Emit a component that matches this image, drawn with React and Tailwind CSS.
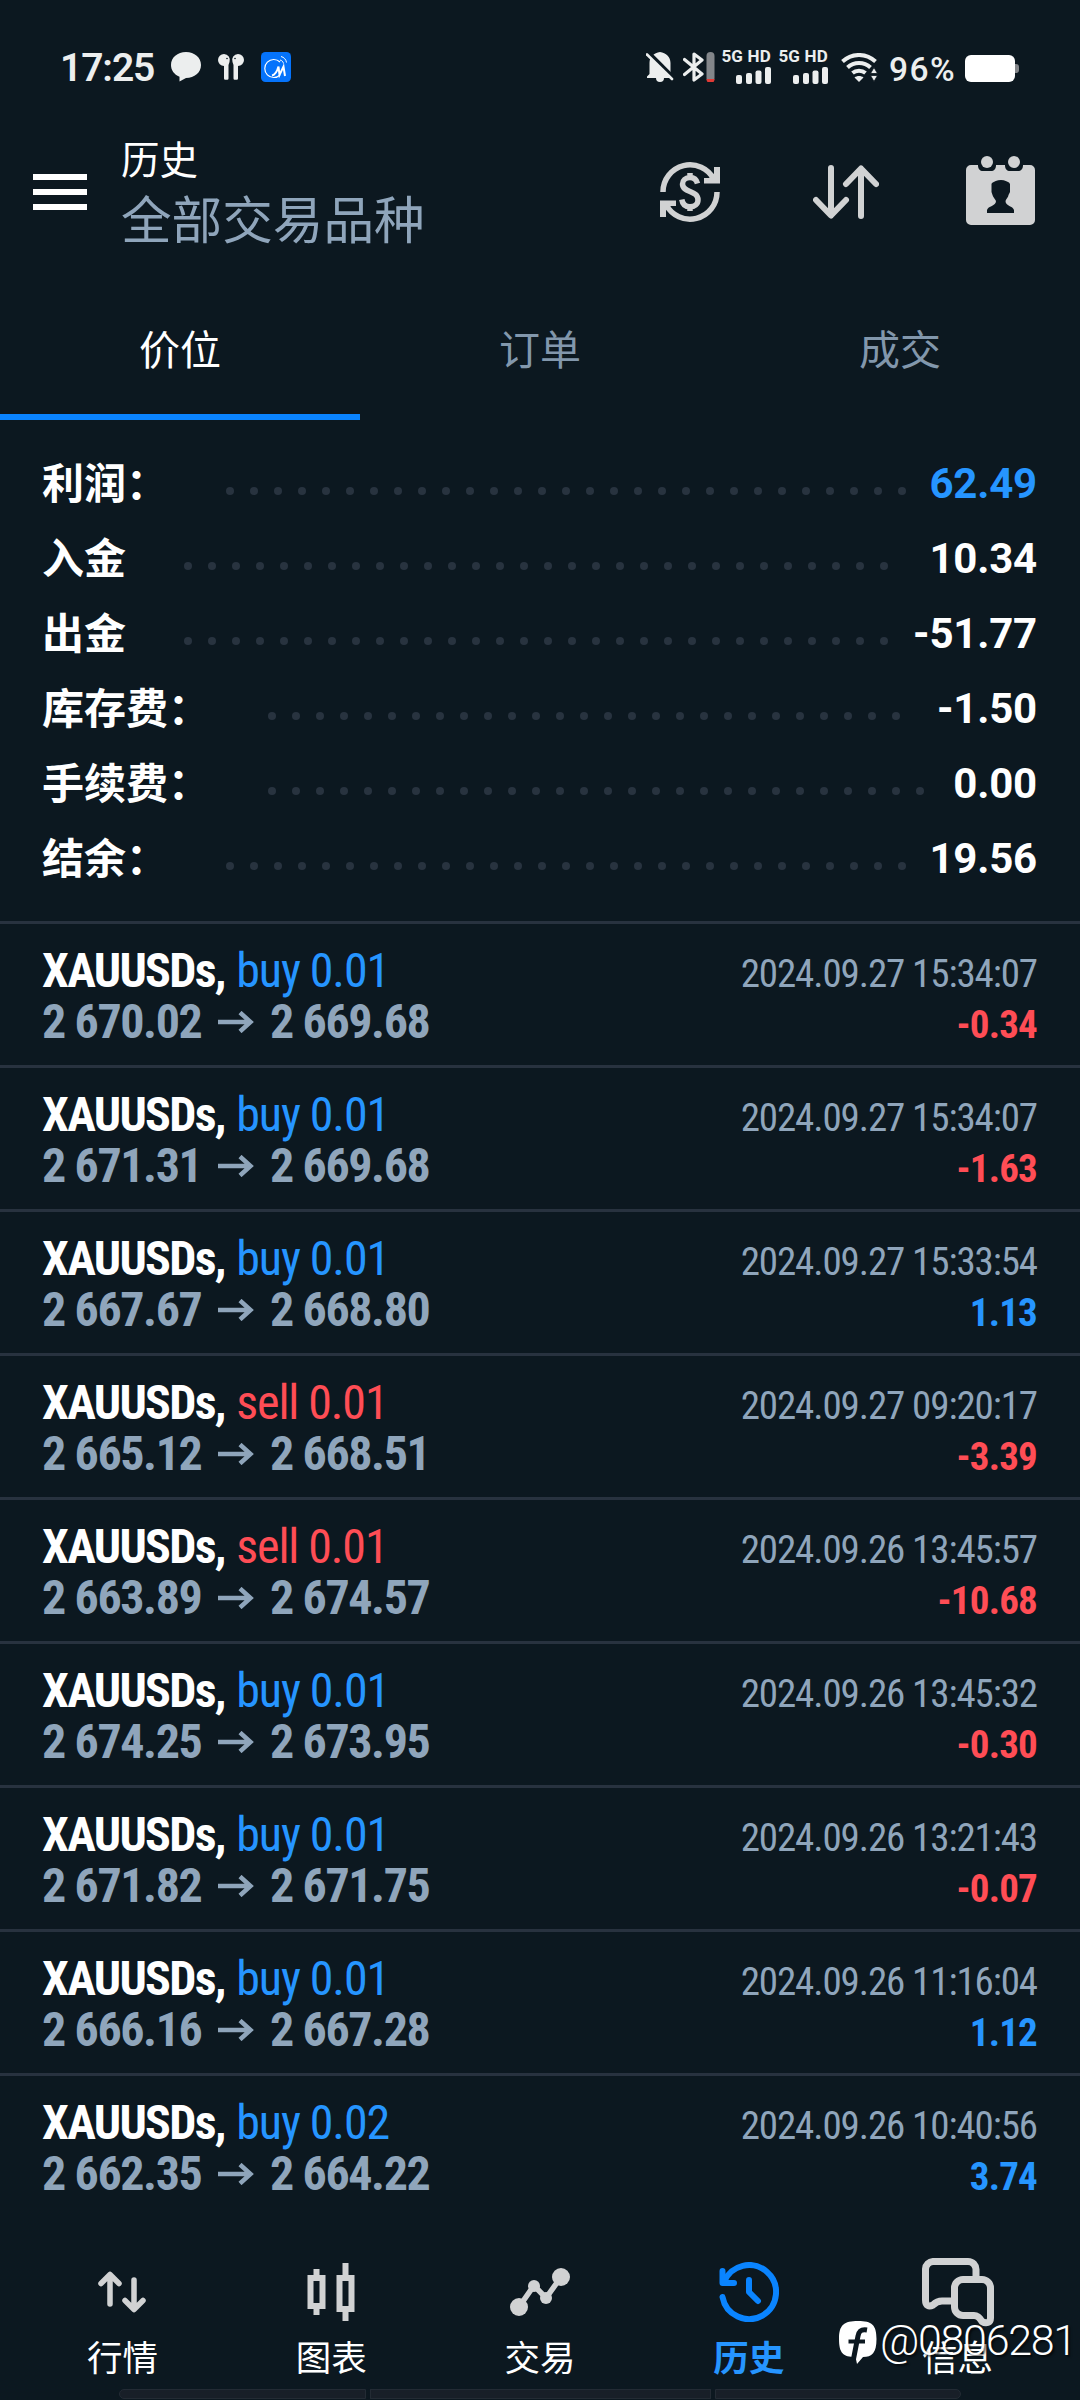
import clsx from 'clsx';

const summary = [
  { label: '利润：', value: '62.49', dots: 29, accent: true },
  { label: '入金', value: '10.34', dots: 30 },
  { label: '出金', value: '-51.77', dots: 30 },
  { label: '库存费：', value: '-1.50', dots: 27 },
  { label: '手续费：', value: '0.00', dots: 28 },
  { label: '结余：', value: '19.56', dots: 29 },
];

const trades = [
  { side: 'buy', lot: '0.01', open: '2 670.02', close: '2 669.68', time: '2024.09.27 15:34:07', profit: '-0.34' },
  { side: 'buy', lot: '0.01', open: '2 671.31', close: '2 669.68', time: '2024.09.27 15:34:07', profit: '-1.63' },
  { side: 'buy', lot: '0.01', open: '2 667.67', close: '2 668.80', time: '2024.09.27 15:33:54', profit: '1.13' },
  { side: 'sell', lot: '0.01', open: '2 665.12', close: '2 668.51', time: '2024.09.27 09:20:17', profit: '-3.39' },
  { side: 'sell', lot: '0.01', open: '2 663.89', close: '2 674.57', time: '2024.09.26 13:45:57', profit: '-10.68' },
  { side: 'buy', lot: '0.01', open: '2 674.25', close: '2 673.95', time: '2024.09.26 13:45:32', profit: '-0.30' },
  { side: 'buy', lot: '0.01', open: '2 671.82', close: '2 671.75', time: '2024.09.26 13:21:43', profit: '-0.07' },
  { side: 'buy', lot: '0.01', open: '2 666.16', close: '2 667.28', time: '2024.09.26 11:16:04', profit: '1.12' },
  { side: 'buy', lot: '0.02', open: '2 662.35', close: '2 664.22', time: '2024.09.26 10:40:56', profit: '3.74' },
];

function Signal() {
  return (
    <div className="w-12 flex flex-col items-end">
      <span className="text-[17px] leading-[14px] font-bold tracking-[0.2px] whitespace-nowrap">5G HD</span>
      <svg width="35" height="17" viewBox="0 0 35 17" fill="#eceeee" className="mt-[4px]">
        <rect x="0" y="8" width="6" height="9" rx="2" />
        <rect x="10" y="6" width="6" height="11" rx="2" />
        <rect x="19.5" y="3.5" width="6" height="13.5" rx="2" />
        <rect x="29" y="0" width="6" height="17" rx="2" />
      </svg>
    </div>
  );
}

function StatusBar() {
  return (
    <div className="h-[112px] pt-[47px] flex items-start text-[#eceeee] font-['Roboto',sans-serif]">
      <span className="ml-[60px] mt-[1px] w-[111px] text-[39px] leading-[40px] font-semibold tracking-[-1.1px]">17:25</span>
      <svg width="30" height="30" viewBox="0 0 30 30" fill="#eceeee" className="mt-[5px]">
        <path d="M15 0C23.500 0 30 5.500 30 13S23.500 26 15 26L8.500 29.500V24.800C3 22.500 0 18 0 13C0 5.500 6.500 0 15 0Z" />
      </svg>
      <svg width="26" height="26" viewBox="0 0 26 26" className="ml-[17px] mt-[7px]">
        <g fill="#eceeee">
          <path d="M6 0a6 6 0 0 1 5.500 8L10.500 11V24.500a1.200 1.200 0 0 1-1.200 1.200H7.200A1.200 1.200 0 0 1 6 24.500V12A6 6 0 0 1 6 0Z" />
          <path d="M20 0a6 6 0 0 0-5.500 8L15.500 11V24.500a1.200 1.200 0 0 0 1.200 1.200h2.100A1.200 1.200 0 0 0 20 24.500V12A6 6 0 0 0 20 0Z" />
        </g>
        <circle cx="9" cy="4.500" r="0.800" fill="#0c1820" />
        <circle cx="17" cy="4.500" r="0.800" fill="#0c1820" />
      </svg>
      <svg width="30" height="30" viewBox="0 0 30 30" fill="none" stroke="#fff" className="ml-[17px] mt-[5px]">
        <rect width="30" height="30" rx="4.500" fill="#0573fb" stroke="none" />
        <path d="M19 10A9 9 0 1 0 19 23" strokeWidth="1.200" />
        <path d="M11 23.500C15 22.500 16.500 18 17.500 14.500L18.500 23L22.500 14.500L24 24" strokeWidth="2" />
        <path d="M19 8c2 .5 3 1.500 3.500 3.500M20 4.500c3 .8 5 2.800 5.500 6" strokeWidth="1" />
      </svg>

      <svg width="28" height="30" viewBox="0 0 28 30" className="ml-[355px] mt-[5px]">
        <path d="M14 0C20 1 24.500 4.500 24.500 11V22L26.500 24.500V26H18a4 4 0 0 1-8 0H1V24.500L3.500 22V11C3.500 4.500 8 1 14 0Z" fill="#eceeee" />
        <path d="M2 0L28 26" stroke="#0c1820" strokeWidth="4" />
        <path d="M1 2.500L26 27" stroke="#eceeee" strokeWidth="2.600" strokeLinecap="round" />
      </svg>
      <svg width="32" height="30" viewBox="0 0 32 30" className="ml-[9px] mt-[5px]" fill="none">
        <path d="M1.500 7.500L19 22L11 28V2L19 8L1.500 22.500" stroke="#eceeee" strokeWidth="3.200" strokeLinejoin="round" strokeLinecap="round" />
        <rect x="23.500" width="8" height="30" rx="4" fill="#83868a" />
        <path d="M23.500 27H31.500A4 4 0 0 1 23.500 27Z" fill="#e23a35" />
      </svg>
      <div className="ml-[8px] mt-[2px] flex gap-[9px]">
        <Signal />
        <Signal />
      </div>
      <svg width="37" height="30" viewBox="0 0 37 30" fill="none" stroke="#eceeee" strokeWidth="4" className="ml-[13px] mt-[6px]">
        <path d="M1.500 8.500C11 -0.200 25 -0.200 34.500 8.500" />
        <path d="M6.500 14.500C13 8.500 23 8.500 29.500 14.500" />
        <path d="M11.500 20C15 17 21 17 24.500 20" />
        <path d="M18 29L13.500 24.500C16 22.500 20 22.500 22.500 24.500Z" fill="#eceeee" stroke="none" />
        <path d="M33 14.500L36.500 20.500H29.500ZM33 28.500L29.500 22.500H36.500Z" fill="#eceeee" stroke="#0c1820" strokeWidth="0.800" />
      </svg>
      <span className="ml-[11px] mt-[3px] w-[68px] text-[33.5px] leading-[40px] font-medium tracking-[1.4px] whitespace-nowrap">96%</span>
      <div className="ml-[8px] mt-[8px] flex items-center">
        <div className="w-[50px] h-[27px] rounded-[6px] bg-white" />
        <div className="w-1 h-[9px] rounded-r-[3px] bg-[#83868a]" />
      </div>
    </div>
  );
}

function Header() {
  return (
    <header className="h-[160px] flex items-center">
      <button className="ml-[33px] w-[54px] flex flex-col gap-[9px]">
        <span className="h-[6px] bg-white" />
        <span className="h-[6px] bg-white" />
        <span className="h-[6px] bg-white" />
      </button>
      <div className="ml-[34px] flex-1 flex flex-col gap-[7px] pb-[3px]">
        <h1 className="text-[38.500px] leading-[46px] text-white">历史</h1>
        <p className="text-[50.600px] leading-[60px] text-[#8fa5bb]">全部交易品种</p>
      </div>
      <svg width="60" height="60" viewBox="0 0 60 60" fill="none" stroke="#d1d2d3" strokeWidth="5.500">
        <path d="M3 30A27 27 0 0 1 54 17.500" />
        <path d="M44 16H49L54 12V5H60V21.500H44Z" fill="#d1d2d3" stroke="none" />
        <path d="M57 30A27 27 0 0 1 6 42.500" />
        <path d="M16 44H11L6 48V55H0V38.500H16Z" fill="#d1d2d3" stroke="none" />
        <path d="M37.500 21.500C36.500 17.500 33.500 15.500 30 15.500C25.500 15.500 22.500 18.500 22.500 22C22.500 31 38 28 38 38C38 42 34.500 44.800 30 44.800C25.500 44.800 22.500 42 21.800 37.500M30 11V16M30 44V49" />
      </svg>
      <svg width="66" height="54" viewBox="0 0 66 54" fill="none" stroke="#d1d2d3" strokeWidth="6" strokeLinecap="round" strokeLinejoin="round" className="ml-[93px]">
        <path d="M18 3V50M3 35L18 50.500L33 35" />
        <path d="M48 51V4M33 19L48 3.500L63 19" />
      </svg>
      <svg width="69" height="69" viewBox="0 0 69 69" fill="#d1d2d3" className="ml-[87px] mr-[45px] mb-[3px]">
        <path d="M5 9H12C12 13 14 15 17 15H25C28 15 30 13 30 9H39C39 13 41 15 44 15H52C55 15 57 13 57 9H64A5 5 0 0 1 69 14V64A5 5 0 0 1 64 69H5A5 5 0 0 1 0 64V14A5 5 0 0 1 5 9Z" />
        <circle cx="21" cy="6" r="6" />
        <circle cx="48" cy="6" r="6" />
        <path d="M26 27C28 25.500 31 24 35 24C39 24 41 25.500 43 26.500L44 28V36L42.500 39C42.500 41 40 43 39.500 45C39.500 50 47 50 48 54V57H21V54C22 50 30 50 30 45C29 43 27 41 26.500 39L25.500 36V28Z" fill="#0c1820" />
      </svg>
    </header>
  );
}

function Tabs() {
  return (
    <div className="h-[148px] grid grid-cols-3 text-center text-[41px] leading-[60px] text-[#8297ac]">
      <div className="pt-[45px] border-b-[6px] border-[#0a84ff] text-white">价位</div>
      <div className="pt-[45px]">订单</div>
      <div className="pt-[45px]">成交</div>
    </div>
  );
}

function SummaryRow({ label, value, dots, accent }) {
  return (
    <div className="h-[75px] px-[42px] flex items-center font-bold text-[42px] leading-[75px] text-white">
      <span className="whitespace-nowrap">{label}</span>
      <div className="ml-[58px] mt-[21px] flex gap-4">
        {Array.from({ length: dots }, (_, i) => (
          <span key={i} className="size-2 rounded-full bg-[#28333f]" />
        ))}
      </div>
      <span className={clsx("ml-auto mr-[1px] mt-[5px] font-['Roboto',sans-serif] tracking-[-0.2px]", accent && 'text-[#2695ff]')}>{value}</span>
    </div>
  );
}

function TradeRow({ side, lot, open, close, time, profit }) {
  const loss = profit.startsWith('-');
  return (
    <div className="h-[144px] border-t-[3px] border-[#28323f] pt-[21px] pl-[42px] pr-[43px] font-['Roboto_Condensed','Roboto',sans-serif] font-stretch-condensed text-[48px] leading-[51px]">
      <div className="h-[51px] flex items-baseline justify-between">
        <div className="whitespace-nowrap">
          <span className="font-bold tracking-[-1.7px] text-white">XAUUSDs, </span>
          <span className={clsx('ml-[2px] tracking-[-1.1px]', side === 'buy' ? 'text-[#2695ff]' : 'text-[#ff4d55]')}>{side} {lot}</span>
        </div>
        <span className="text-[39px] tracking-[-1.1px] text-[#8fa5bb]">{time}</span>
      </div>
      <div className="h-[51px] flex items-baseline justify-between font-bold text-[#8fa5bb]">
        <div className="flex items-baseline whitespace-nowrap tracking-[-1.4px]">
          <span className="w-[176px]">{open}</span>
          <svg width="36" height="22" viewBox="0 0 36 22" fill="none" stroke="#8fa5bb" strokeWidth="4.500" className="mb-[14px] self-end">
            <path d="M0 11H33M22 1.500L32.500 11L22 20.500" />
          </svg>
          <span className="ml-[16px]">{close}</span>
        </div>
        <span className={clsx('text-[39px] tracking-[-0.8px]', loss ? 'text-[#ff4d55]' : 'text-[#2695ff]')}>{profit}</span>
      </div>
    </div>
  );
}

function NavItem({ label, active, children }) {
  return (
    <div className="flex flex-col items-center">
      <div className="h-[72px] flex items-center justify-center">{children}</div>
      <span className={clsx('mt-[8px] text-[35.500px] leading-[40px]', active ? 'font-bold text-[#2695ff]' : 'text-white')}>
        {label}
      </span>
    </div>
  );
}

function BottomNav() {
  return (
    <nav className="h-[172px] pt-[39px] px-[18px] grid grid-cols-5">
      <NavItem label="行情">
        <svg width="48" height="42" viewBox="0 0 48 42" fill="none" stroke="#d1d2d3" strokeWidth="5.500" strokeLinecap="round" strokeLinejoin="round">
          <path d="M12 33V4M3 12.500L12 3.500L21 12.500" />
          <path d="M36 9V38M27 29.500L36 38.500L45 29.500" />
        </svg>
      </NavItem>
      <NavItem label="图表">
        <svg width="48" height="58" viewBox="0 0 48 58" fill="none" stroke="#d1d2d3" strokeWidth="6">
          <path d="M3.500 15H15.500V43H3.500ZM9.500 6V15M9.500 43V52" />
          <path d="M32.500 15H44.500V46H32.500ZM38.500 0V15M38.500 46V58" />
        </svg>
      </NavItem>
      <NavItem label="交易">
        <svg width="60" height="48" viewBox="0 0 60 48" fill="#d1d2d3">
          <path d="M9 39L24 17.500L36 30L51 9" fill="none" stroke="#d1d2d3" strokeWidth="5.500" />
          <circle cx="9" cy="39" r="9" />
          <circle cx="24" cy="18" r="6" />
          <circle cx="36" cy="30" r="6" />
          <circle cx="51" cy="9" r="9" />
        </svg>
      </NavItem>
      <NavItem label="历史" active>
        <svg width="60" height="60" viewBox="0 0 60 60" fill="none" stroke="#0a84ff" strokeWidth="6" strokeLinecap="round" strokeLinejoin="round">
          <path d="M3.500 35A27 27 0 1 0 5 20" />
          <path d="M3.500 9V21H15" />
          <path d="M30 18V30L39 39" />
        </svg>
      </NavItem>
      <NavItem label="信息">
        <svg width="72" height="69" viewBox="0 0 72 69" fill="none" stroke="#d1d2d3" strokeWidth="7" strokeLinejoin="round">
          <path d="M54 20V12A8 8 0 0 0 46 3.500H12A8 8 0 0 0 3.500 12V42C3.500 48 7 49 11 47C14 44 16 43 20 43H31" />
          <path d="M41 21.500H60A8.500 8.500 0 0 1 68.500 30V60C68.500 65 64 66 60 63.500C58 60 56 57.500 52 57.500H41A8.500 8.500 0 0 1 32.500 49V30A8.500 8.500 0 0 1 41 21.500Z" />
        </svg>
      </NavItem>
    </nav>
  );
}

function Watermark() {
  return (
    <div className="absolute left-[839px] top-[2315px] flex items-start text-white [text-shadow:2px_2px_2px_rgba(0,0,0,0.6)]">
      <svg width="38" height="44" viewBox="0 0 38 44" className="mt-[6px]">
        <path d="M19 0C33 0 37.500 4 37.500 18S33 36 24 36L18 43L16.500 36C4 36 0 32 0 18S5 0 19 0Z" fill="#fff" />
        <path d="M28 9C22 8 20 10 19 15L14.500 38" fill="none" stroke="#0c1820" strokeWidth="5" />
        <path d="M9.500 20.500H26" fill="none" stroke="#0c1820" strokeWidth="4" />
      </svg>
      <span className="ml-[3px] mt-[1px] text-[43px] leading-[48px] font-light tracking-[-1.3px] font-['Roboto',sans-serif]">@0806281</span>
    </div>
  );
}

export default function App() {
  return (
    <div className="relative w-[1080px] h-[2400px] overflow-hidden flex flex-col bg-[#0c1820] font-['Noto_Sans_CJK_SC',sans-serif]">
      <StatusBar />
      <Header />
      <Tabs />
      <section className="pt-[23px] pb-[28px]">
        {summary.map((row) => (
          <SummaryRow key={row.label} {...row} />
        ))}
      </section>
      <section>
        {trades.map((trade) => (
          <TradeRow key={trade.time + trade.open} {...trade} />
        ))}
      </section>
      <BottomNav />
      <div className="mx-[119px] h-[10px] grid grid-cols-[247px_341px_246px] gap-1">
        <span className="rounded-l-[5px] bg-[#181f28] border border-[#232b34]" />
        <span className="bg-[#181f28] border border-[#232b34]" />
        <span className="rounded-r-[5px] bg-[#181f28] border border-[#232b34]" />
      </div>
      <Watermark />
    </div>
  );
}
